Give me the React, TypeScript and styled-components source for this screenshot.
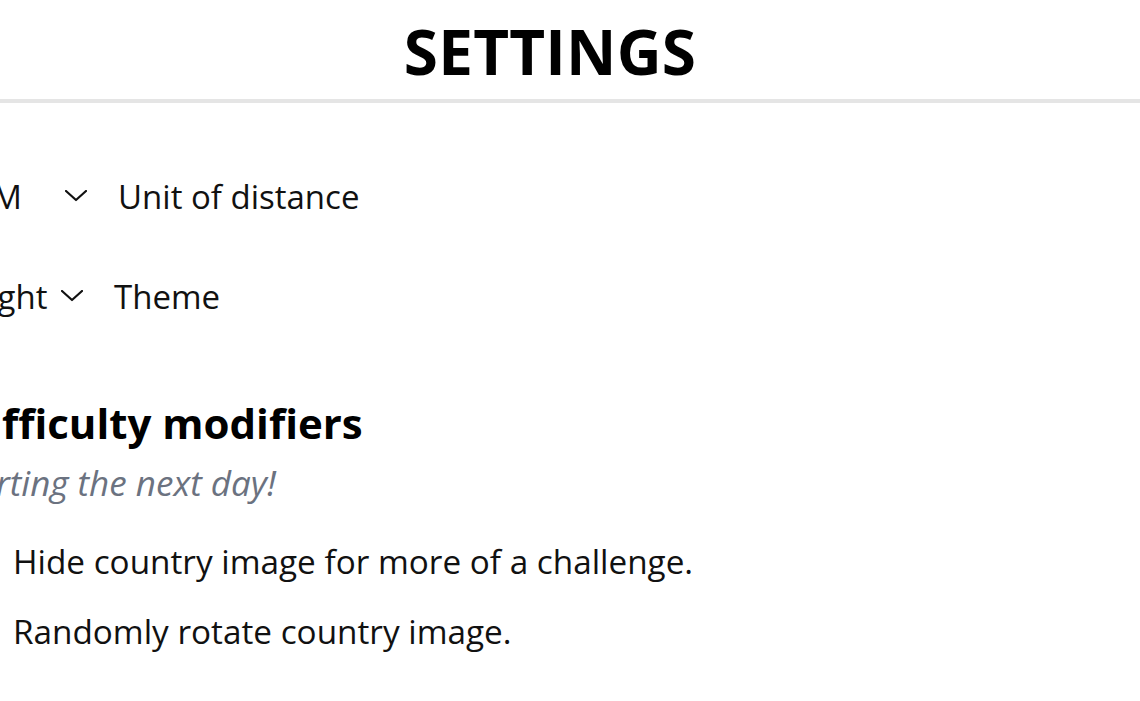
import React from "react";
import styled, { createGlobalStyle } from "styled-components";

const GlobalStyle = createGlobalStyle`
  html, body {
    margin: 0;
    padding: 0;
    background: #ffffff;
    overflow: hidden;
  }
  body {
    font-family: "Open Sans", "Noto Sans", sans-serif;
    color: #111111;
  }
`;

const Page = styled.div`
  margin-left: -40px;
  width: 1180px;
`;

const Header = styled.header`
  height: 97px;
  padding-top: 2px;
  border-bottom: 4px solid #e5e5e5;
  display: flex;
  align-items: center;
  justify-content: center;
`;

const Title = styled.h1`
  margin: 0;
  font-size: 62px;
  font-weight: 700;
  letter-spacing: 0.2px;
  color: #000;
  line-height: 1;
`;

const Body = styled.main`
  padding: 43px 0 0 12px;
  display: flex;
  flex-direction: column;
`;

const Row = styled.div`
  display: flex;
  align-items: center;
  height: 100px;
  font-size: 33px;
`;

const Select = styled.div<{ $width: number }>`
  width: ${(p) => p.$width}px;
  display: flex;
  align-items: center;
  justify-content: space-between;
  margin-right: 31px;
`;

const Chevron = styled.svg`
  width: 22px;
  height: 12px;
  flex: none;
`;

const Label = styled.span``;

const Heading = styled.h2`
  margin: 50px 0 0 -14px;
  font-size: 42px;
  font-weight: 700;
  line-height: 1.3;
  color: #000;
`;

const Note = styled.p`
  margin: 9px 0 0 -25px;
  font-size: 35px;
  font-style: italic;
  color: #6b7280;
  line-height: 1.3;
`;

const ChecksWrap = styled.div`
  margin-top: 21px;
  display: flex;
  flex-direction: column;
`;

const CheckRow = styled.label`
  display: flex;
  align-items: center;
  gap: 18px;
  height: 70px;
  font-size: 33.3px;
`;

const Box = styled.span`
  width: 19px;
  height: 19px;
  border: 2px solid #767676;
  border-radius: 3px;
  flex: none;
`;

const Caret = () => (
  <Chevron viewBox="0 0 22 12" fill="none">
    <polyline points="1,1 11,10 21,1" stroke="#111" strokeWidth="2.2" strokeLinecap="round" strokeLinejoin="round" />
  </Chevron>
);

export default function App() {
  return (
    <>
      <GlobalStyle />
      <Page>
        <Header>
          <Title>SETTINGS</Title>
        </Header>
        <Body>
          <Row>
            <Select $width={115}>
              <span>KM</span>
              <Caret />
            </Select>
            <Label>Unit of distance</Label>
          </Row>
          <Row>
            <Select $width={111}>
              <span>Light</span>
              <Caret />
            </Select>
            <Label>Theme</Label>
          </Row>
          <Heading>Difficulty modifiers</Heading>
          <Note>Starting the next day!</Note>
          <ChecksWrap>
            <CheckRow>
              <Box />
              <span>Hide country image for more of a challenge.</span>
            </CheckRow>
            <CheckRow>
              <Box />
              <span>Randomly rotate country image.</span>
            </CheckRow>
          </ChecksWrap>
        </Body>
      </Page>
    </>
  );
}
